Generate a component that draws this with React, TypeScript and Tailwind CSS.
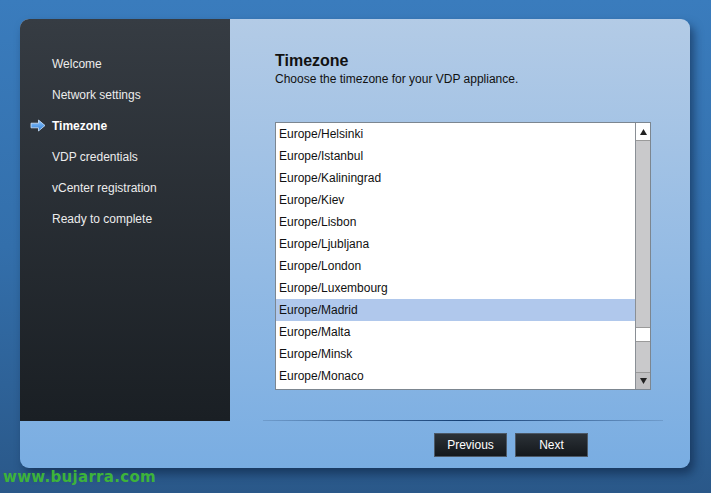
const steps = [
  { label: 'Welcome' },
  { label: 'Network settings' },
  { label: 'Timezone', active: true },
  { label: 'VDP credentials' },
  { label: 'vCenter registration' },
  { label: 'Ready to complete' },
]

const zones = [
  'Europe/Helsinki',
  'Europe/Istanbul',
  'Europe/Kaliningrad',
  'Europe/Kiev',
  'Europe/Lisbon',
  'Europe/Ljubljana',
  'Europe/London',
  'Europe/Luxembourg',
  'Europe/Madrid',
  'Europe/Malta',
  'Europe/Minsk',
  'Europe/Monaco',
]

const StepArrow = () => (
  <svg width="16" height="13" viewBox="0 0 16 13" className="shrink-0">
    <defs>
      <linearGradient id="arrowFill" x1="0" y1="0" x2="0" y2="1">
        <stop offset="0" stopColor="#8fc6ff" />
        <stop offset="1" stopColor="#2f7fd6" />
      </linearGradient>
    </defs>
    <path
      d="M1 4.2 H8.5 V1 L15 6.5 L8.5 12 V8.8 H1 Z"
      fill="url(#arrowFill)"
      stroke="#cfe6ff"
      strokeWidth="0.8"
      strokeLinejoin="round"
    />
  </svg>
)

const Sidebar = () => {
  return (
    <div className="w-[210px] h-[402px] bg-gradient-to-b from-[#363c43] to-[#1a1f24] pt-[29px] shrink-0">
      <ul>
        {steps.map((step, index) => (
          <li key={index} className="h-[31px] flex items-center">
            <span className="w-[32px] pl-[10px] flex items-center">
              {step.active && <StepArrow />}
            </span>
            <span
              className={
                step.active
                  ? 'text-[12px] font-bold text-white'
                  : 'text-[12px] text-[#ececec]'
              }
            >
              {step.label}
            </span>
          </li>
        ))}
      </ul>
    </div>
  )
}

const ScrollBar = () => {
  return (
    <div className="w-[15px] flex flex-col border-l border-[#8a8f95] bg-[#c9c9cb]">
      <div className="h-[18px] bg-white border-b border-[#9a9a9a] flex items-center justify-center">
        <svg width="7" height="6" viewBox="0 0 7 6">
          <path d="M3.5 0 L7 6 H0 Z" fill="#222" />
        </svg>
      </div>
      <div className="flex-1 flex flex-col">
        <div className="h-[186px]" />
        <div className="h-[15px] bg-white border-y border-[#9a9a9a]" />
        <div className="flex-1" />
      </div>
      <div className="h-[17px] bg-[#c0c0c2] border-t border-[#9a9a9a] flex items-center justify-center">
        <svg width="7" height="6" viewBox="0 0 7 6">
          <path d="M0 0 H7 L3.5 6 Z" fill="#222" />
        </svg>
      </div>
    </div>
  )
}

const ZoneList = () => {
  return (
    <div className="w-[376px] h-[268px] border border-[#7c8690] bg-white flex">
      <ul className="flex-1">
        {zones.map((zone, index) => (
          <li
            key={index}
            className={
              zone === 'Europe/Madrid'
                ? 'h-[22px] flex items-center pl-[3px] bg-[#b0c8ec] text-[12px] text-[#111]'
                : 'h-[22px] flex items-center pl-[3px] text-[12px] text-[#111]'
            }
          >
            {zone}
          </li>
        ))}
      </ul>
      <ScrollBar />
    </div>
  )
}

export default function App() {
  return (
    <div
      className="relative w-[711px] h-[493px] overflow-hidden bg-gradient-to-b from-[#3a7cbd] via-[#336fab] to-[#2a5889] pt-[19px] pl-[20px]"
      style={{ fontFamily: '"Liberation Sans", Arial, sans-serif' }}
    >
      <div className="w-[670px] h-[449px] rounded-[9px] overflow-hidden bg-gradient-to-b from-[#b3cbe6] to-[#79ade2] shadow-[4px_6px_10px_rgba(10,30,60,0.55)] flex flex-col">
        <div className="flex">
          <Sidebar />
          <div className="flex-1 pl-[45px] pt-[32px]">
            <h2 className="text-[16px] font-bold text-[#111] leading-[20px]">Timezone</h2>
            <p className="text-[12px] text-[#111] leading-[15px] mt-[1px]">
              Choose the timezone for your VDP appliance.
            </p>
            <div className="mt-[35px]">
              <ZoneList />
            </div>
          </div>
        </div>
        <div className="flex-1 relative">
          <div className="ml-[243px] mt-[-1px] w-[400px] h-[1px] bg-gradient-to-r from-[#6f9ccc] via-[#143f74] to-[#6f9ccc]" />
          <div className="flex gap-[8px] pl-[414px] pt-[12px]">
            <button className="w-[73px] h-[24px] bg-gradient-to-b from-[#2c3238] to-[#14181c] text-white text-[12px] border border-[#4c5866]">
              Previous
            </button>
            <button className="w-[73px] h-[24px] bg-gradient-to-b from-[#2c3238] to-[#14181c] text-white text-[12px] border border-[#4c5866]">
              Next
            </button>
          </div>
        </div>
      </div>
      <div
        className="absolute left-[3px] top-[470px] text-[15px] leading-none font-bold text-[#3db33a] tracking-[0.3px]"
        style={{ fontFamily: '"DejaVu Sans", Verdana, sans-serif' }}
      >
        www.bujarra.com
      </div>
    </div>
  )
}
